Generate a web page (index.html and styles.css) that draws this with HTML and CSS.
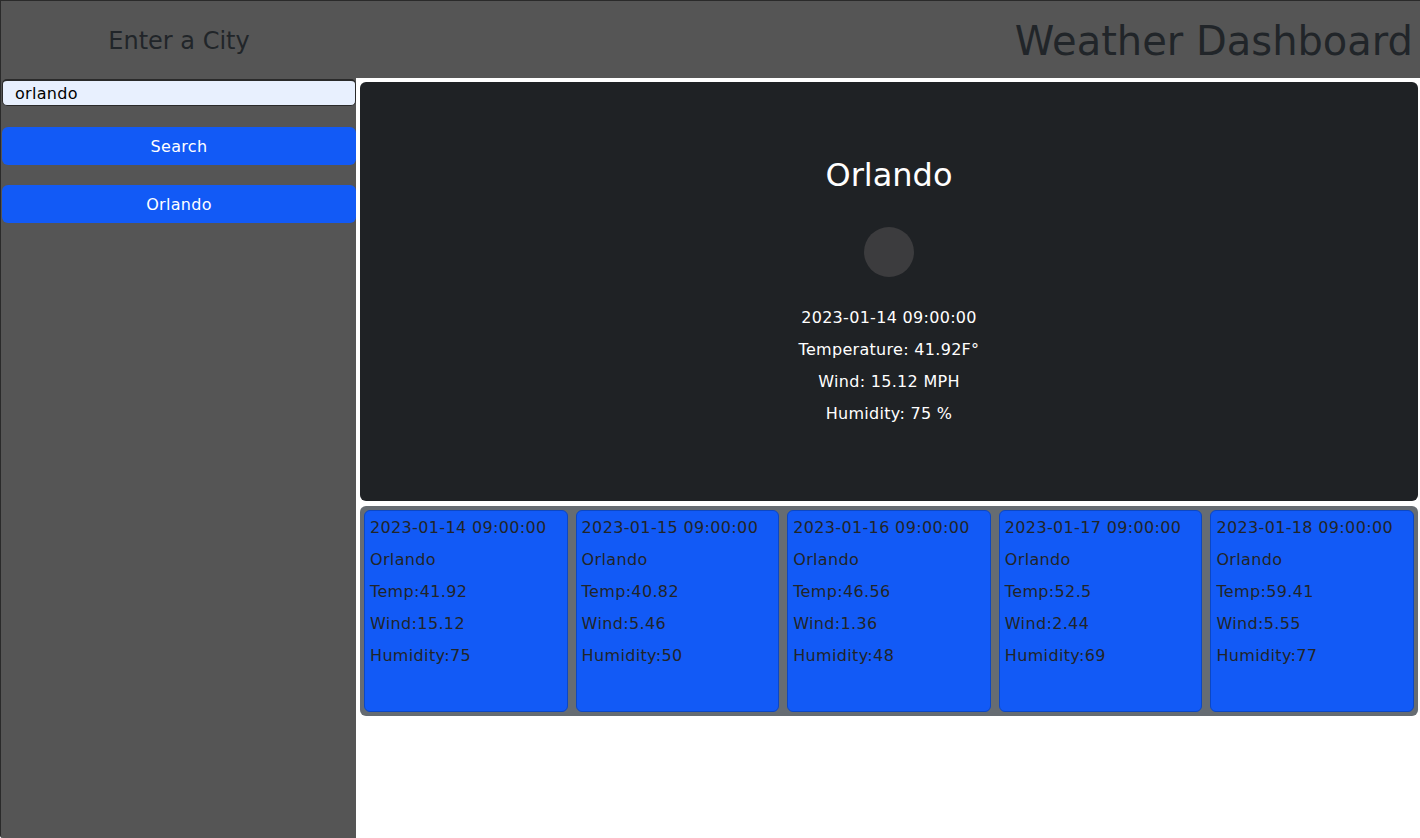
FILE: index.html
```html
<!DOCTYPE html>
<html lang="en">
<head>
<meta charset="utf-8">
<title>Weather Dashboard</title>
<link rel="stylesheet" href="styles.css">
</head>
<body>
<header class="header">
  <h4 class="header-left">Enter a City</h4>
  <h1 class="header-right">Weather Dashboard</h1>
</header>
<div class="layout">
  <aside class="sidebar">
    <input class="city-input" type="text" value="orlando">
    <button class="btn btn-search">Search</button>
    <button class="btn btn-history">Orlando</button>
  </aside>
  <main class="main">
    <section class="current">
      <h2 class="current-city">Orlando</h2>
      <div class="current-icon"></div>
      <p class="current-line">2023-01-14 09:00:00</p>
      <p class="current-line">Temperature: 41.92F°</p>
      <p class="current-line">Wind: 15.12 MPH</p>
      <p class="current-line">Humidity: 75 %</p>
    </section>
    <section class="forecast">
      <div class="day">
        <p>2023-01-14 09:00:00</p><p>Orlando</p><p>Temp:41.92</p><p>Wind:15.12</p><p>Humidity:75</p>
      </div>
      <div class="day">
        <p>2023-01-15 09:00:00</p><p>Orlando</p><p>Temp:40.82</p><p>Wind:5.46</p><p>Humidity:50</p>
      </div>
      <div class="day">
        <p>2023-01-16 09:00:00</p><p>Orlando</p><p>Temp:46.56</p><p>Wind:1.36</p><p>Humidity:48</p>
      </div>
      <div class="day">
        <p>2023-01-17 09:00:00</p><p>Orlando</p><p>Temp:52.5</p><p>Wind:2.44</p><p>Humidity:69</p>
      </div>
      <div class="day">
        <p>2023-01-18 09:00:00</p><p>Orlando</p><p>Temp:59.41</p><p>Wind:5.55</p><p>Humidity:77</p>
      </div>
    </section>
  </main>
</div>
</body>
</html>
```

FILE: styles.css
```css
* { box-sizing: border-box; }

html, body {
  margin: 0;
  height: 100%;
}

body {
  font-family: "DejaVu Sans", Verdana, sans-serif;
  font-size: 16px;
  color: #212529;
  background: #fff;
  overflow: hidden;
}

.header {
  display: grid;
  grid-template-columns: 356px 1fr;
  height: 78px;
  background: #555555;
  border-top: 1px solid #2a2a2a;
  border-left: 1px solid #2a2a2a;
}

.header-left {
  margin: 0;
  padding-top: 26px;
  font-size: 24px;
  font-weight: 400;
  line-height: 29px;
  text-align: center;
  color: #212529;
}

.header-right {
  margin: 0;
  padding-top: 16px;
  padding-right: 7px;
  font-size: 40px;
  font-weight: 400;
  line-height: 48px;
  text-align: right;
  color: #212529;
}

.layout {
  display: grid;
  grid-template-columns: 356px 1fr;
  height: calc(100% - 78px);
}

.sidebar {
  display: flex;
  flex-direction: column;
  background: #555555;
  border-left: 1px solid #2a2a2a;
  border-bottom-left-radius: 3px;
  padding: 1px 0 0 1px;
}

.city-input {
  height: 27px;
  margin: 0;
  padding: 0 12px;
  font-family: inherit;
  font-size: 16px;
  letter-spacing: 0.3px;
  color: #000;
  background: #e8f0fe;
  border: 1px solid #2a2a2a;
  border-top-width: 2px;
  border-radius: 5px;
  outline: none;
}

.btn {
  height: 38px;
  margin: 0;
  border: none;
  border-radius: 6px;
  background: #125af6;
  color: #fff;
  font-family: inherit;
  font-size: 16px;
  letter-spacing: 0.3px;
}

.btn-search { margin-top: 21px; }
.btn-history { margin-top: 20px; }

.main {
  padding: 4px 2px 0 4px;
}

.current {
  display: flex;
  flex-direction: column;
  align-items: center;
  height: 419px;
  padding-top: 74px;
  background: #1f2225;
  border-radius: 6px;
  color: #fff;
}

.current-city {
  margin: 0;
  font-size: 32px;
  font-weight: 400;
  line-height: 38px;
}

.current-icon {
  width: 50px;
  height: 50px;
  margin-top: 33px;
  margin-bottom: 29px;
  border-radius: 50%;
  background: #3c3c3e;
}

.current-line {
  margin: 0 0 8px;
  line-height: 24px;
  letter-spacing: 0.3px;
}

.forecast {
  display: grid;
  grid-template-columns: repeat(5, 1fr);
  gap: 8px;
  margin-top: 5px;
  padding: 4px;
  background: #666c72;
  border-radius: 6px;
}

.day {
  height: 202px;
  padding: 5px 5px 4px;
  background: #125af6;
  border: 1px solid #0c47c4;
  border-radius: 6px;
}

.day p {
  margin: 0 0 8px;
  line-height: 24px;
  letter-spacing: 0.35px;
  white-space: nowrap;
}
```
